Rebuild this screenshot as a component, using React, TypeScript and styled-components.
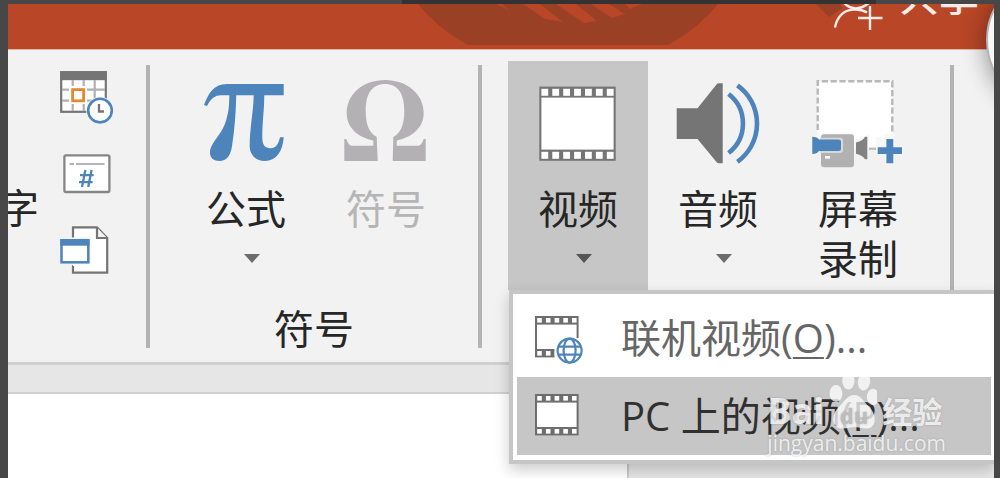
import React from "react";
import styled, { createGlobalStyle } from "styled-components";

const GREY = "#757575";
const BLUE = "#4d84bb";

const GlobalStyle = createGlobalStyle`
  * { box-sizing: border-box; }
  body {
    margin: 0;
    background: #474747;
    font-family: "Open Sans", "Noto Sans CJK SC", sans-serif;
    color: #262626;
    overflow: hidden;
  }
  button {
    margin: 0;
    padding: 0;
    border: 0;
    background: none;
    font: inherit;
    color: inherit;
  }
  svg { display: block; flex: none; }
`;

const Page = styled.div`
  display: flex;
  flex-direction: column;
  min-height: 100vh;
  padding: 0 6px 0 8px;
`;

const TopEdge = styled.div`
  height: 4px;
  width: 48%;
  margin-left: 40%;
  background: #333333;
`;

const Window = styled.main`
  position: relative;
  display: flex;
  flex: 1;
  flex-direction: column;
  overflow: hidden;
  background: #e7e7e7;
`;

const TitleBar = styled.header`
  position: relative;
  display: flex;
  justify-content: flex-end;
  height: 46px;
  padding-right: 15px;
  border-bottom: 1px solid #e3b3a6;
  background: #b84627;
  overflow: hidden;
`;

const TitleArt = styled.svg`
  position: absolute;
  left: 410px;
  top: 0;
`;

const ShareButton = styled.button`
  position: relative;
  display: flex;
  align-items: flex-end;
  gap: 14px;
  height: 27px;
  color: #fbece8;
  font-size: 40px;
  font-weight: 500;
  line-height: 50px;
  white-space: nowrap;
`;

const ShareLabel = styled.span`
  margin-bottom: 10px;
`;

const Ribbon = styled.section`
  display: flex;
  height: 315px;
  padding-top: 11px;
  border-bottom: 3px solid #d0d0d0;
  background: #f2f2f2;
`;

const Separator = styled.div`
  flex: none;
  width: 4px;
  height: 283px;
  margin-top: 4px;
  background: #b3b3b3;
`;

const TextGroup = styled.div`
  display: flex;
  gap: 21px;
  width: 138px;
`;

const ClippedLabel = styled.div`
  display: flex;
  justify-content: flex-end;
  width: 31px;
  padding-top: 122px;
  overflow: hidden;
  font-size: 40px;
  line-height: 50px;
`;

const SmallTools = styled.div`
  display: flex;
  flex-direction: column;
  gap: 22px;
  padding-top: 10px;
`;

const Group = styled.div<{ $grow?: boolean }>`
  position: relative;
  flex: ${(p) => (p.$grow ? "1" : "none")};
`;

const GroupRow = styled.div`
  display: flex;
  padding-left: 26px;
`;

const GroupSpacer = styled.div`
  flex: none;
  width: 22px;
`;

const GroupName = styled.div`
  padding-top: 14px;
  text-align: center;
  font-size: 40px;
  line-height: 50px;
`;

const BigButton = styled.button<{ $open?: boolean }>`
  display: flex;
  flex: none;
  flex-direction: column;
  align-items: center;
  width: 140px;
  height: 229px;
  padding-top: 15px;
  background: ${(p) => (p.$open ? "#c6c6c6" : "transparent")};

  &:disabled { color: #b5b5b5; }
`;

const BigLabel = styled.span`
  width: 80px;
  margin-top: 16px;
  font-size: 40px;
  line-height: 50px;
`;

const Arrow = styled.span<{ $dark?: boolean }>`
  margin: 20px 0 0 11px;
  border: 8px solid transparent;
  border-top: 9px solid ${(p) => (p.$dark ? "#555555" : "#6c6c6c")};
  border-bottom: 0;
`;

const Menu = styled.div`
  position: absolute;
  z-index: 2;
  top: 229px;
  left: 27px;
  right: 0;
  padding: 5px 3px 5px 4px;
  border: 4px solid #c6c6c6;
  border-right: 0;
  background: #ffffff;
  box-shadow: 0 6px 14px rgba(0, 0, 0, 0.2);
`;

const MenuItem = styled.button<{ $active?: boolean }>`
  display: flex;
  align-items: center;
  gap: 36px;
  width: 100%;
  height: 78px;
  padding-left: 16px;
  background: ${(p) => (p.$active ? "#c6c6c6" : "transparent")};
  color: ${(p) => (p.$active ? "#303030" : "#666666")};
  font-size: 40px;
  line-height: 50px;
  white-space: nowrap;

  u {
    text-decoration-thickness: 2px;
    text-underline-offset: 4px;
  }
`;

const Gap = styled.div`
  height: 27px;
  background: #e6e6e6;
`;

const Sheet = styled.div`
  flex: 1;
  width: 63%;
  border-top: 2px solid #d0d0d0;
  border-right: 2px solid #cacaca;
  background: #ffffff;
`;

const Bubble = styled.div`
  position: absolute;
  z-index: 1;
  top: -32px;
  right: -128px;
  width: 136px;
  height: 136px;
  border: 2px solid #b5b5b5;
  border-radius: 50%;
  background: #f7f7f7;
  box-shadow: 0 4px 24px rgba(0, 0, 0, 0.4);
`;

const Watermark = styled.div`
  position: absolute;
  z-index: 3;
  right: 48px;
  bottom: 21px;
  color: rgba(255, 255, 255, 0.8);
  text-shadow: 0 0 2px rgba(120, 120, 120, 0.5);
  pointer-events: none;
`;

const Brand = styled.div`
  display: flex;
  align-items: flex-end;
  gap: 5px;
  height: 58px;
  font-weight: bold;
`;

const BrandLatin = styled.span`
  font-size: 36px;
  line-height: 36px;
`;

const BrandHan = styled.span`
  font-size: 30px;
  line-height: 34px;
`;

const BrandUrl = styled.div`
  font-size: 21px;
  line-height: 28px;
`;

const CalendarIcon = () => (
  <svg width="54" height="54" viewBox="0 0 54 54" fill="none" aria-hidden="true">
    <rect x="1.2" y="1.2" width="44.6" height="39.6" fill="#fff" stroke={GREY} strokeWidth="2.2" />
    <rect x="0.2" y="0.2" width="46.5" height="9" fill={GREY} />
    <path d="M12.7 9V15M12.7 33V40M23.7 9V15M23.7 33V40M34.7 9V30M2 18.7H9M27 18.7H45M2 29.7H9M27 29.7H36" stroke="#b0b0b0" strokeWidth="2.2" />
    <rect x="12.6" y="18.6" width="11" height="11.2" fill="#fff" stroke="#e9872f" strokeWidth="2.8" />
    <circle cx="40" cy="39.6" r="13.8" fill="#f2f2f2" />
    <circle cx="40" cy="39.6" r="11.8" fill="#fff" stroke={BLUE} strokeWidth="2.6" />
    <path d="M39 33V40.5H44" stroke={GREY} strokeWidth="2.3" />
  </svg>
);

const SlideNumberIcon = () => (
  <svg width="54" height="54" viewBox="0 0 54 54" fill="none" aria-hidden="true">
    <rect x="4.4" y="8.4" width="45" height="36.6" rx="1.6" fill="#fff" stroke="#868686" strokeWidth="2.3" />
    <path d="M9.5 17H14M16 17H44.5" stroke="#b4b4b4" strokeWidth="2.2" />
    <path d="M25.4 23L22 40M31.6 23L28.2 40M20 28.2H33.6M19 35.2H32.6" stroke={BLUE} strokeWidth="2.3" />
  </svg>
);

const ObjectIcon = () => (
  <svg width="54" height="54" viewBox="0 0 54 54" fill="none" aria-hidden="true">
    <path d="M13 4.4H37L47.2 15V49.6H13Z" fill="#fff" stroke={GREY} strokeWidth="2.2" />
    <path d="M37 4.4V15H47.2" fill="#f2f2f2" stroke={GREY} strokeWidth="2.2" />
    <rect x="-2" y="14.4" width="33.3" height="27.8" fill="#f2f2f2" />
    <path d="M13 42.2H31.3V14.4" stroke="#fff" strokeWidth="1.4" />
    <rect x="1.5" y="17.3" width="26.8" height="22" fill="#fff" stroke={BLUE} strokeWidth="2.5" />
    <rect x="0.3" y="16.3" width="29.2" height="6.4" fill={BLUE} />
  </svg>
);

const EquationIcon = () => (
  <svg width="92" height="92" viewBox="0 0 92 92" aria-hidden="true">
    <path
      d="M83.7 8H27C14 8 8.5 17 4 29L7 30C11 22.5 15 19.3 21 19.3H29.3C29.3 30 28.5 36 26.5 43C22 60 10 66 10 77C10 82 14 85 19.5 85C26.5 85 30 80 31.7 72C33.6 61 36 40 36.2 19.3H53.7C53.4 36 49.7 52 49.7 70C49.7 79 56 85 65 85C76 85 82.6 76 83.7 61.3H80C78.4 68.5 75.6 72.3 70.7 72.3C64.5 72.3 62.3 68.5 62.3 61C62.3 45 64.3 34 64.3 19.3H83.7Z"
      fill={BLUE}
    />
  </svg>
);

const SymbolIcon = () => (
  <svg width="92" height="92" viewBox="0 0 92 92" aria-hidden="true">
    <path
      d="M45 4C67 4 83.7 18 83.7 37C83.7 51 73 61 56.7 64.5V69.7H78.3Q81.5 69.7 83.7 63H85.7V85H52.7L53.3 61C61 57 64.3 48 64.3 35C64.3 17 57.5 8 45 8C32.5 8 25.7 17 25.7 35C25.7 48 29 57 36.7 61L37.7 85H4.3V63H6.3Q8.5 69.7 11.7 69.7H33.3V64.5C17 61 6.7 51 6.7 37C6.7 18 23 4 45 4Z"
      fill="#b3b1b4"
    />
  </svg>
);

const FilmIcon = () => (
  <svg width="92" height="92" viewBox="0 0 92 92" aria-hidden="true">
    <rect x="7.3" y="10.6" width="76.4" height="74.2" fill={GREY} />
    <rect x="9.4" y="21.6" width="72.2" height="52" fill="#fff" />
    {[0, 1, 2, 3, 4, 5, 6].map((i) => (
      <g key={i} fill="#fff">
        <rect x={9.4 + i * 10.9} y="12.8" width="6.8" height="7" />
        <rect x={9.4 + i * 10.9} y="75.8" width="6.8" height="7" />
      </g>
    ))}
  </svg>
);

const SpeakerIcon = () => (
  <svg width="92" height="92" viewBox="0 0 92 92" fill="none" aria-hidden="true">
    <path d="M4.7 32.3H25.5L44.5 8.6Q45.5 7.3 47 7.3H50.7V87.3H47Q45.5 87.3 44.5 86L25.5 63H4.7Z" fill={GREY} />
    <path d="M56.6 18A37.5 37.5 0 0 1 56.6 77" stroke={BLUE} strokeWidth="4.6" />
    <path d="M65.4 9.4A47 47 0 0 1 65.4 85.8" stroke={BLUE} strokeWidth="4.6" />
  </svg>
);

const ScreenIcon = () => (
  <svg width="92" height="92" viewBox="0 0 92 92" fill="none" aria-hidden="true">
    <rect x="5.7" y="5.3" width="74.6" height="67" fill="#fff" />
    <path d="M5.7 54V5.3H80.3V62" stroke="#b8b8b8" strokeWidth="2.4" strokeDasharray="6.2 2.6" />
    <path d="M5 57H42V64L57 58V72H64V61H72V58H82V73H5Z" fill="#f8f8f8" />
    <path d="M57 72.7H64" stroke="#b8b8b8" strokeWidth="2.2" />
    <rect x="9" y="58.3" width="33" height="33" rx="3" fill="#b1b1b1" />
    <path d="M8 61.7H29Q31 61.7 31 64V74Q31 77 28 77H8Z" fill="#d8d8d8" />
    <path d="M0.3 60.8Q5 61 7 63.4H26.5Q29 63.4 29 65.5V73Q29 75 26.5 75H7Q5 77.8 0.3 78Z" fill={BLUE} />
    <rect x="13" y="80" width="5" height="2.6" fill="#fff" />
    <path d="M44 66.5Q51 65 53 60.8H55.3V83.2H53Q51 79.5 44 77.7Z" fill="#828282" />
    <path d="M74.4 63H81.3V71.3H90V78H81.3V87.3H74.4V78H65.7V71.3H74.4Z" fill={BLUE} stroke="#f5f5f5" strokeWidth="3" paintOrder="stroke" />
  </svg>
);

const MenuFilm = ({ online }: { online?: boolean }) => (
  <svg width="52" height="52" viewBox="0 0 52 52" fill="none" aria-hidden="true">
    <rect x="2" y="4" width="43.6" height="41.4" fill="#6e6e6e" />
    <rect x="4" y="12.6" width="39.6" height="24.4" fill="#fff" />
    {[0, 1, 2, 3, 4].map((i) => (
      <g key={i} fill="#fff">
        <rect x={4.2 + i * 8.7} y="6" width="4.6" height="4.6" />
        <rect x={4.2 + i * 8.7} y="39" width="4.6" height="4.6" />
      </g>
    ))}
    {online && (
      <>
        <path d="M21.5 34L25 26H47V46H21.5Z" fill="#fff" />
        <circle cx="36.6" cy="38.6" r="14" fill="#fff" />
        <g stroke={BLUE} strokeWidth="2.2">
          <circle cx="36.6" cy="38.6" r="12" />
          <ellipse cx="36.6" cy="38.6" rx="6" ry="12" />
          <path d="M25.6 34.6H47.6M25.6 42.6H47.6" />
        </g>
      </>
    )}
  </svg>
);

const PersonAddIcon = () => (
  <svg width="52" height="27" viewBox="0 0 52 27" fill="none" stroke="currentColor" strokeWidth="2.4" aria-hidden="true">
    <path d="M11 -1Q22 10 36 -1" />
    <path d="M2 23.5C4 12.5 11 6 20 5.6Q28 5 34 8.4" />
    <path d="M37 2V26M25 14H49.5" />
  </svg>
);

const Paw = () => (
  <svg width="48" height="58" viewBox="0 0 48 58" aria-hidden="true">
    <g fill="#fff" fillOpacity="0.75">
      <ellipse cx="7" cy="22.5" rx="6.4" ry="8.4" />
      <ellipse cx="19.4" cy="9.6" rx="6.2" ry="9" />
      <ellipse cx="35" cy="10.6" rx="6.2" ry="9" transform="rotate(8 35 10.6)" />
      <ellipse cx="44" cy="26" rx="6.2" ry="8.2" />
      <path d="M25.4 24C32 24 35 31 40 36C48 43 48 57 38 57.4C33 57.6 30 56 25.4 56C21 56 18 57.6 13 57.4C2 57 2 43 10 36C15 31 18 24 25.4 24Z" />
    </g>
    <text x="25" y="53" textAnchor="middle" fontSize="22" fontWeight="bold" fill="#bdbdbd">du</text>
  </svg>
);

export default function App() {
  return (
    <>
      <GlobalStyle />
      <Page>
        <TopEdge />
        <Window>
          <TitleBar>
            <TitleArt width="440" height="45" viewBox="0 0 440 45" aria-hidden="true">
              <path d="M0 0H300Q280 25 250 41H50Q20 25 0 0Z" fill="#9a4025" />
              <path d="M78 0H84L91 6ZM105 0H122L145 18L127 15ZM138 0H158L179 17L166 19ZM173 0H191L207 10L194 14ZM207 0H224L212 5Z" fill="#b84627" />
              <path d="M398 0H422L424 4L411 13Z" fill="#9a4025" />
            </TitleArt>
            <ShareButton type="button">
              <PersonAddIcon />
              <ShareLabel>共享</ShareLabel>
            </ShareButton>
          </TitleBar>

          <Ribbon>
            <TextGroup>
              <ClippedLabel>字</ClippedLabel>
              <SmallTools>
                <button type="button" aria-label="日期和时间"><CalendarIcon /></button>
                <button type="button" aria-label="幻灯片编号"><SlideNumberIcon /></button>
                <button type="button" aria-label="对象"><ObjectIcon /></button>
              </SmallTools>
            </TextGroup>
            <Separator />
            <Group>
              <GroupRow>
                <BigButton type="button">
                  <EquationIcon />
                  <BigLabel>公式</BigLabel>
                  <Arrow />
                </BigButton>
                <BigButton type="button" disabled>
                  <SymbolIcon />
                  <BigLabel>符号</BigLabel>
                </BigButton>
                <GroupSpacer />
              </GroupRow>
              <GroupName>符号</GroupName>
            </Group>
            <Separator />
            <Group $grow>
              <GroupRow>
                <BigButton type="button" $open aria-haspopup="menu" aria-expanded="true">
                  <FilmIcon />
                  <BigLabel>视频</BigLabel>
                  <Arrow $dark />
                </BigButton>
                <BigButton type="button" aria-haspopup="menu">
                  <SpeakerIcon />
                  <BigLabel>音频</BigLabel>
                  <Arrow />
                </BigButton>
                <BigButton type="button">
                  <ScreenIcon />
                  <BigLabel>屏幕录制</BigLabel>
                </BigButton>
                <GroupSpacer />
                <Separator />
              </GroupRow>
              <Menu role="menu">
                <MenuItem type="button" role="menuitem">
                  <MenuFilm online />
                  <span>联机视频(<u>O</u>)...</span>
                </MenuItem>
                <MenuItem type="button" role="menuitem" $active>
                  <MenuFilm />
                  <span>PC 上的视频(<u>P</u>)...</span>
                </MenuItem>
              </Menu>
            </Group>
          </Ribbon>
          <Gap />
          <Sheet />
          <Bubble />
          <Watermark>
            <Brand>
              <BrandLatin>Bai</BrandLatin>
              <Paw />
              <BrandHan>经验</BrandHan>
            </Brand>
            <BrandUrl>jingyan.baidu.com</BrandUrl>
          </Watermark>
        </Window>
      </Page>
    </>
  );
}
